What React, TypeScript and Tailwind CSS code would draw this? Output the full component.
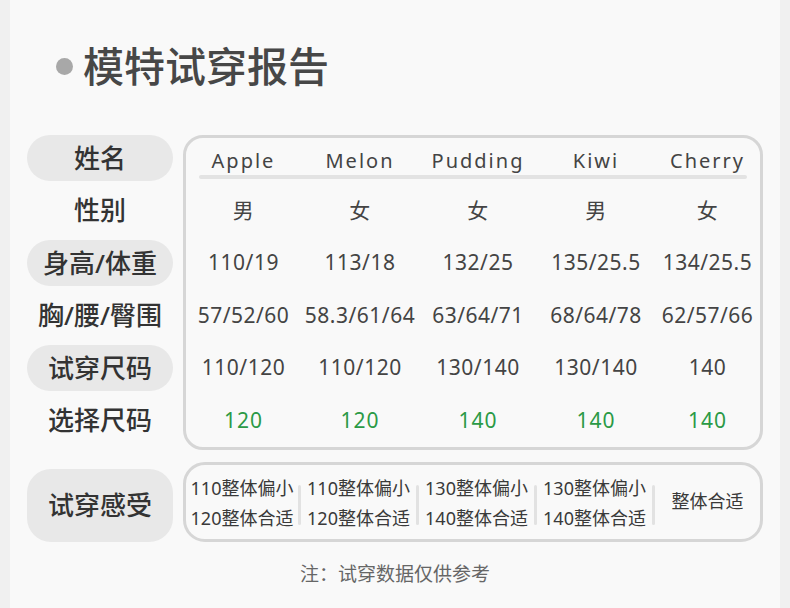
import React from "react";

const names = ["Apple", "Melon", "Pudding", "Kiwi", "Cherry"];

const rows = [
  ["男", "女", "女", "男", "女"],
  ["110/19", "113/18", "132/25", "135/25.5", "134/25.5"],
  ["57/52/60", "58.3/61/64", "63/64/71", "68/64/78", "62/57/66"],
  ["110/120", "110/120", "130/140", "130/140", "140"],
];
const picked = ["120", "120", "140", "140", "140"];

const labels = [
  { text: "姓名", pill: true },
  { text: "性别", pill: false },
  { text: "身高/体重", pill: true },
  { text: "胸/腰/臀围", pill: false },
  { text: "试穿尺码", pill: true },
  { text: "选择尺码", pill: false },
];

const feelings = [
  ["110整体偏小", "120整体合适"],
  ["110整体偏小", "120整体合适"],
  ["130整体偏小", "140整体合适"],
  ["130整体偏小", "140整体合适"],
];

const cols = "grid grid-cols-[115px_118px_118px_118px_1fr]";

export default function App() {
  return (
    <div className="min-h-[608px] bg-[#f0f0f0] flex justify-center font-['Noto_Sans','Noto_Sans_CJK_SC',sans-serif]">
      <div className="w-[770px] bg-[#f9f9f9] pb-[20px]">
        {/* Title */}
        <div className="h-[132px] flex items-center pl-[46px]">
          <span className="w-[17px] h-[17px] rounded-full bg-[#a8a8a8] mr-[10px]" />
          <h1 className="text-[41px] leading-none font-medium text-[#474747]">模特试穿报告</h1>
        </div>

        {/* Size table */}
        <div className="flex pl-[17px] gap-[10px]">
          <div className="w-[146px]">
            {labels.map((l) => (
              <div key={l.text} className="h-[52.5px] flex items-center justify-center">
                <div
                  className={
                    "h-[46px] w-full flex items-center justify-center rounded-full text-[26px] font-medium text-[#333]" +
                    (l.pill ? " bg-[#e8e8e8]" : "")
                  }
                >
                  {l.text}
                </div>
              </div>
            ))}
          </div>

          <div className="w-[580px] mt-[3px] border-[3px] border-[#d6d6d6] rounded-[20px] text-[#444]">
            <div className={cols + " h-[37px] pt-[8px] items-center text-[20px] tracking-[2px]"}>
              {names.map((n) => (
                <div key={n} className="text-center leading-none">
                  {n}
                </div>
              ))}
            </div>
            <div className="h-[4px] mx-[13px] rounded-full bg-[#e3e3e3]" />
            <div className="mt-[5px]">
              {rows.map((r, i) => (
                <div key={i} className={cols + " h-[52.5px] items-center text-[21px] tracking-[0.5px]"}>
                  {r.map((v, j) => (
                    <div key={j} className="text-center leading-none">
                      {v}
                    </div>
                  ))}
                </div>
              ))}
              <div className={cols + " h-[52.5px] items-center text-[21px] tracking-[1px] text-[#2b9a46]"}>
                {picked.map((v, j) => (
                  <div key={j} className="text-center leading-none">
                    {v}
                  </div>
                ))}
              </div>
            </div>
          </div>
        </div>

        {/* Feeling */}
        <div className="flex items-end pl-[17px] gap-[10px] mt-[12px]">
          <div className="w-[146px] h-[73px] rounded-[24px] bg-[#e8e8e8] flex items-center justify-center text-[26px] font-medium text-[#333]">
            试穿感受
          </div>
          <div className={"w-[580px] h-[80px] border-[3px] border-[#d6d6d6] rounded-[22px] text-[#3a3a3a] items-center " + cols}>
            {feelings.map((f, i) => (
              <div key={i} className="flex items-center h-full">
                <div className="flex-1 text-center text-[18px] leading-[30px] pt-[2px]">
                  <div>{f[0]}</div>
                  <div>{f[1]}</div>
                </div>
                <div className="w-[3px] h-[40px] rounded-full bg-[#e2e2e2] mt-[6px]" />
              </div>
            ))}
            <div className="text-center text-[18px]">整体合适</div>
          </div>
        </div>

        <p className="mt-[18px] text-center text-[19px] leading-[28px] text-[#666]">注：试穿数据仅供参考</p>
      </div>
    </div>
  );
}
